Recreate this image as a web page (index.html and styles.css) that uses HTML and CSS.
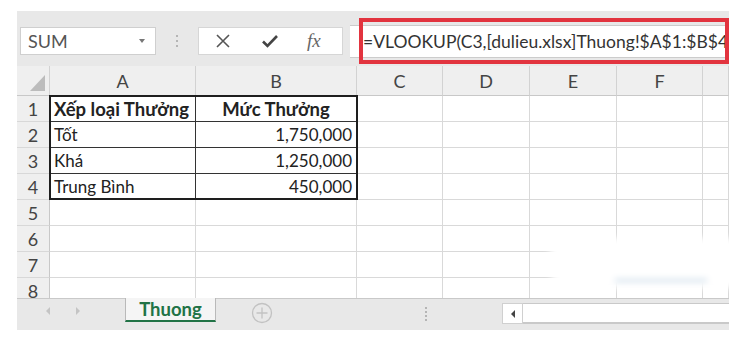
FILE: index.html
```html
<!DOCTYPE html>
<html lang="vi">
<head>
  <meta charset="UTF-8">
  <meta name="viewport" content="width=device-width, initial-scale=1.0">
  <link rel="stylesheet" href="styles.css">
  <title>Thuong</title>
</head>
<body>
  <div class="excel">
    <!-- thanh công thức -->
    <div class="formula-bar">
      <div class="namebox">
        <span>SUM</span>
        <span class="drop"></span>
      </div>
      <div class="sep"><i></i><i></i><i></i></div>
      <div class="fxbox">
        <svg width="16" height="16" viewBox="0 0 16 16"><path d="M2 2 L14 14 M14 2 L2 14" stroke="#555" stroke-width="1.6" fill="none"/></svg>
        <svg width="18" height="16" viewBox="0 0 18 16"><path d="M2 8.5 L6.5 13 L16 3" stroke="#444" stroke-width="2.6" fill="none"/></svg>
        <span class="fx">fx</span>
      </div>
      <div class="formula">
        <span class="ftext">=VLOOKUP(C3,[dulieu.xlsx]Thuong!$A$1:$B$4</span>
        <div class="highlight"></div>
      </div>
    </div>

    <div class="grid">
      <div class="hd corner"><span class="tri"></span></div>
      <div class="hd">A</div>
      <div class="hd">B</div>
      <div class="hd">C</div>
      <div class="hd">D</div>
      <div class="hd">E</div>
      <div class="hd">F</div>
      <div class="hd"></div>

      <div class="rh">1</div>
      <div class="c t bold">Xếp loại Thưởng</div>
      <div class="c t bold center">Mức Thưởng</div>
      <div class="c"></div><div class="c"></div><div class="c"></div><div class="c"></div><div class="c"></div>

      <div class="rh">2</div>
      <div class="c t">Tốt</div>
      <div class="c t num">1,750,000</div>
      <div class="c"></div><div class="c"></div><div class="c"></div><div class="c"></div><div class="c"></div>

      <div class="rh">3</div>
      <div class="c t">Khá</div>
      <div class="c t num">1,250,000</div>
      <div class="c"></div><div class="c"></div><div class="c"></div><div class="c"></div><div class="c"></div>

      <div class="rh">4</div>
      <div class="c t">Trung Bình</div>
      <div class="c t num">450,000</div>
      <div class="c"></div><div class="c"></div><div class="c"></div><div class="c"></div><div class="c"></div>

      <div class="rh">5</div>
      <div class="c"></div><div class="c"></div><div class="c"></div><div class="c"></div><div class="c"></div><div class="c"></div><div class="c"></div>
      <div class="rh">6</div>
      <div class="c"></div><div class="c"></div><div class="c"></div><div class="c"></div><div class="c"></div><div class="c"></div><div class="c"></div>
      <div class="rh">7</div>
      <div class="c"></div><div class="c"></div><div class="c"></div><div class="c"></div><div class="c"></div><div class="c"></div><div class="c"></div>
      <div class="rh">8</div>
      <div class="c"></div><div class="c"></div><div class="c"></div><div class="c"></div><div class="c"></div><div class="c"></div><div class="c"></div>

      <div class="frame"></div>
      <div class="smudge"><span></span></div>
    </div>

    <div class="tabs">
      <div class="arrows">
        <svg width="8" height="10" viewBox="0 0 8 10"><path d="M6 1 L2 5 L6 9 Z" fill="#c4c4c4"/></svg>
        <svg width="8" height="10" viewBox="0 0 8 10"><path d="M2 1 L6 5 L2 9 Z" fill="#c4c4c4"/></svg>
      </div>
      <div class="tab">Thuong</div>
      <div class="add">
        <svg width="22" height="22" viewBox="0 0 22 22"><circle cx="11" cy="11" r="9.5" stroke="#c2c2c2" stroke-width="1.3" fill="none"/><path d="M11 5.5 V16.5 M5.5 11 H16.5" stroke="#c2c2c2" stroke-width="1.3"/></svg>
      </div>
      <div class="sep small"><i></i><i></i><i></i><i></i></div>
      <div class="scroll-left">
        <svg width="8" height="10" viewBox="0 0 8 10"><path d="M6 1 L2 5 L6 9 Z" fill="#444"/></svg>
      </div>
      <div class="track"></div>
    </div>
  </div>
</body>
</html>
```

FILE: styles.css
```css
* {
  box-sizing: border-box;
}
body {
  margin: 0;
  background-color: #fff;
  font-family: Lato, "Open Sans", sans-serif;
}
.excel {
  margin: 11px 0 0 17px;
  width: 712px;
  height: 319px;
  background-color: #e8e8e8;
}

/* thanh công thức */
.formula-bar {
  height: 55px;
  display: flex;
  align-items: flex-start;
  padding: 16px 0 0 3px;
}
.namebox {
  width: 136px;
  height: 28px;
  background-color: #fff;
  border: 1px solid #cfcfcf;
  display: flex;
  align-items: center;
  justify-content: space-between;
  padding: 0 10px 0 7px;
  font-size: 18px;
  color: #555;
}
.drop {
  width: 0;
  height: 0;
  border-left: 3.5px solid transparent;
  border-right: 3.5px solid transparent;
  border-top: 4px solid #777;
}
.sep {
  width: 42px;
  height: 28px;
  display: flex;
  flex-direction: column;
  align-items: center;
  justify-content: center;
  gap: 3px;
}
.sep i {
  width: 2px;
  height: 2px;
  background-color: #b5b5b5;
}
.fxbox {
  width: 145px;
  height: 28px;
  background-color: #fff;
  border: 1px solid #d6d6d6;
  display: flex;
  align-items: center;
  padding-left: 16px;
  gap: 30px;
}
.fx {
  font-family: "Liberation Serif", serif;
  font-style: italic;
  font-size: 19px;
  color: #666;
  margin-left: -2px;
}
.formula {
  position: relative;
  margin: -2px 0 0 7px;
  width: 379px;
  height: 33px;
  background-color: #fff;
  border-top: 1px solid #ccc;
  border-bottom: 1px solid #ccc;
  padding-left: 13px;
  display: flex;
  align-items: center;
  font-size: 17.5px;
  color: #333;
  white-space: nowrap;
}
.highlight {
  position: absolute;
  left: 9px;
  right: 0;
  top: -8px;
  bottom: -7px;
  border: 4px solid #e2343f;
}

/* lưới */
.grid {
  position: relative;
  height: 232px;
  overflow: hidden;
  display: grid;
  grid-template-columns: 33px 146px 161px 86px 87px 87px 86px 1fr;
  grid-template-rows: 30px repeat(8, 26px);
  background-color: #fff;
}
.hd {
  background-color: #efefef;
  border-right: 1px solid #d2d2d2;
  border-bottom: 1px solid #c8c8c8;
  display: flex;
  align-items: center;
  justify-content: center;
  font-size: 18px;
  color: #444;
}
.corner {
  position: relative;
}
.tri {
  position: absolute;
  right: 4px;
  bottom: 4px;
  width: 0;
  height: 0;
  border-left: 15px solid transparent;
  border-bottom: 16px solid #bcbcbc;
}
.rh {
  background-color: #efefef;
  border-right: 1px solid #c8c8c8;
  border-bottom: 1px solid #d8d8d8;
  display: flex;
  align-items: center;
  justify-content: center;
  font-size: 18px;
  color: #444;
}
.c {
  border-right: 1px solid #d9d9d9;
  border-bottom: 1px solid #d9d9d9;
  font-size: 17px;
  color: #222;
  display: flex;
  align-items: center;
  padding: 0 4px;
  white-space: nowrap;
}
.c.t {
  border-right-color: #333;
  border-bottom-color: #333;
}
.bold {
  font-weight: bold;
  font-size: 18.5px;
}
.center {
  justify-content: center;
}
.num {
  justify-content: flex-end;
}
.frame {
  position: absolute;
  left: 32px;
  top: 29px;
  width: 309px;
  height: 105px;
  border: 2px solid #1e1e1e;
  pointer-events: none;
}
.smudge {
  position: absolute;
  left: 530px;
  top: 172px;
  width: 200px;
  height: 50px;
  background-color: #fff;
  border-radius: 30px 0 0 30px;
  filter: blur(3px);
}
.smudge span {
  position: absolute;
  left: 68px;
  top: 42px;
  width: 92px;
  height: 1px;
  background-color: #6d9bc0;
}

/* thanh trang tính */
.tabs {
  height: 32px;
  border-top: 1px solid #c9c9c9;
  display: flex;
  align-items: flex-start;
}
.arrows {
  width: 108px;
  height: 24px;
  display: flex;
  align-items: center;
  gap: 22px;
  padding-left: 27px;
}
.tab {
  width: 91px;
  height: 24px;
  margin-top: -1px;
  background-color: #f5f5f5;
  border-left: 1px solid #b9b9b9;
  border-right: 1px solid #b9b9b9;
  border-bottom: 2px solid #217346;
  display: flex;
  align-items: center;
  justify-content: center;
  font-weight: bold;
  font-size: 18.5px;
  color: #217346;
}
.add {
  width: 92px;
  height: 24px;
  display: flex;
  align-items: center;
  justify-content: center;
  padding-top: 3px;
}
.sep.small {
  width: 194px;
  height: 26px;
  padding-top: 4px;
  gap: 2px;
  align-items: flex-end;
  padding-right: 75px;
}
.scroll-left {
  width: 21px;
  height: 21px;
  margin-top: 4px;
  background-color: #fff;
  border: 1px solid #d0d0d0;
  display: flex;
  align-items: center;
  justify-content: center;
}
.track {
  flex: 1;
  height: 21px;
  margin-top: 4px;
  background-color: #fff;
  border-top: 1px solid #c9c9c9;
  border-bottom: 2px solid #c9c9c9;
}
```
